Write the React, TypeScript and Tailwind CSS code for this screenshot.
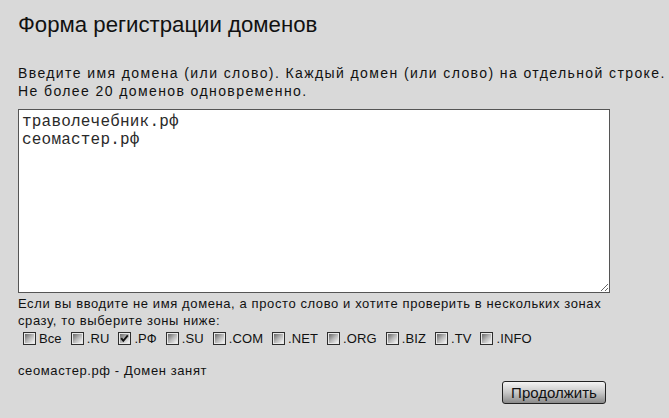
import { useState } from "react";

const zones = ["Все", ".RU", ".РФ", ".SU", ".COM", ".NET", ".ORG", ".BIZ", ".TV", ".INFO"];

function ZoneBox({ label, checked }: { label: string; checked?: boolean }) {
  return (
    <label className="flex items-center gap-[3px] mr-[9px]">
      <span className="relative w-[13px] h-[13px] border border-[#2e2e2e] bg-[#e8e8e8] p-[1px]">
        <span className="block w-full h-full bg-gradient-to-br from-[#6a6a6a] via-[#b8b8b8] to-[#f6f6f6]" />
        {checked && (
          <svg viewBox="0 0 11 11" className="absolute inset-0 w-full h-full">
            <path d="M2.2 5.2 L4.3 7.8 L8.8 2.4" fill="none" stroke="#111" strokeWidth="1.9" />
          </svg>
        )}
      </span>
      <span className="tracking-[0.1px]">{label}</span>
    </label>
  );
}

export default function App() {
  const [domains, setDomains] = useState("траволечебник.рф\nсеомастер.рф");

  return (
    <div className="w-[669px] h-[418px] bg-[#d9d9d9] text-[#111] font-['Liberation_Sans',Arial,sans-serif] pl-[18px] pt-[12px] overflow-hidden">
      <h1 className="text-[22.2px] leading-[26px]">Форма регистрации доменов</h1>

      <p className="mt-[26px] text-[14px] leading-[18px] tracking-[1.4px] whitespace-nowrap">
        Введите имя домена (или слово). Каждый домен (или слово) на отдельной строке.
        <br />
        Не более 20 доменов одновременно.
      </p>

      <textarea
        value={domains}
        onChange={(e) => setDomains(e.target.value)}
        className="mt-[9px] block w-[592px] h-[184px] bg-white border border-[#555] px-[3px] pt-[3px] font-['Liberation_Mono','Courier_New',monospace] text-[16px] leading-[18px] tracking-[0.2px] text-[#2a2a2a] outline-none resize-y"
      />

      <p className="mt-[2px] text-[13px] leading-[17px] tracking-[0.6px] whitespace-nowrap">
        Если вы вводите не имя домена, а просто слово и хотите проверить в нескольких зонах
        <br />
        сразу, то выберите зоны ниже:
      </p>

      <div className="flex items-center mt-[1px] text-[13px] leading-[17px] pl-[5px]">
        {zones.map((z) => (
          <ZoneBox key={z} label={z} checked={z === ".РФ"} />
        ))}
      </div>

      <p className="mt-[15px] text-[13px] leading-[17px] tracking-[0.6px]">сеомастер.рф - Домен занят</p>

      <div className="flex justify-end w-[588px] mt-[2px]">
        <button className="w-[104px] h-[23px] text-[15px] leading-[21px] border border-[#222] rounded-[3px] bg-gradient-to-b from-[#f4f4f4] via-[#c8c8c8] to-[#8a8a8a]">
          Продолжить
        </button>
      </div>
    </div>
  );
}
